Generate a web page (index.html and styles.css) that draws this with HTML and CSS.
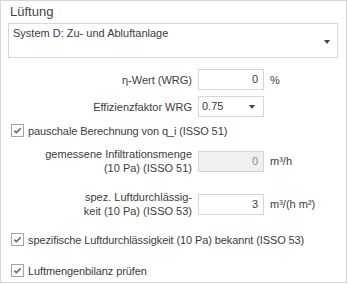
FILE: index.html
```html
<!DOCTYPE html>
<html lang="de">
  <head>
    <meta charset="UTF-8" />
    <title>Lüftung</title>
    <link rel="stylesheet" href="styles.css">
  </head>
  <body>
    <div class="panel">
      <!-- Gruppe Lüftung -->
      <div class="caption">Lüftung</div>
      <div class="combo">
        <span>System D: Zu- und Abluftanlage</span>
        <span class="arrow"></span>
      </div>

      <div class="row row-eta">
        <label>η-Wert (WRG)</label>
        <div class="field">0</div>
        <span class="unit">%</span>
      </div>

      <div class="row row-eff">
        <label>Effizienzfaktor WRG</label>
        <div class="field select">
          <span>0.75</span>
          <span class="arrow"></span>
        </div>
      </div>

      <div class="check check-pauschal">
        <span class="box">
          <svg width="11" height="11" viewBox="0 0 11 11"><path d="M2.3 5.6 L4.4 7.6 L8.7 3.4" fill="none" stroke="#6a6a6a" stroke-width="1.5"/></svg>
        </span>
        <span class="text">pauschale Berechnung von q_i (ISSO 51)</span>
      </div>

      <div class="row row-two row-gem">
        <label>gemessene Infiltrationsmenge<br>(10 Pa) (ISSO 51)</label>
        <div class="field disabled">0</div>
        <span class="unit">m³/h</span>
      </div>

      <div class="row row-two row-spez">
        <label>spez. Luftdurchlässig-<br>keit (10 Pa) (ISSO 53)</label>
        <div class="field">3</div>
        <span class="unit">m³/(h m²)</span>
      </div>

      <div class="check check-spez">
        <span class="box">
          <svg width="11" height="11" viewBox="0 0 11 11"><path d="M2.3 5.6 L4.4 7.6 L8.7 3.4" fill="none" stroke="#6a6a6a" stroke-width="1.5"/></svg>
        </span>
        <span class="text">spezifische Luftdurchlässigkeit (10 Pa) bekannt (ISSO 53)</span>
      </div>

      <div class="check check-bilanz">
        <span class="box">
          <svg width="11" height="11" viewBox="0 0 11 11"><path d="M2.3 5.6 L4.4 7.6 L8.7 3.4" fill="none" stroke="#6a6a6a" stroke-width="1.5"/></svg>
        </span>
        <span class="text">Luftmengenbilanz prüfen</span>
      </div>
    </div>
  </body>
</html>
```

FILE: styles.css
```css
body {
  margin: 0;
  background: white;
  font-family: "Liberation Sans", Arial, sans-serif;
  font-size: 11px;
  color: #3c3c3c;
}
.panel {
  box-sizing: border-box;
  width: 347px;
  height: 283px;
  border: 1px solid #d6d6d6;
  padding: 0 0 0 7px;
}
.caption {
  font-size: 13px;
  line-height: 16px;
  height: 22px;
  padding: 3px 0 0 2px;
  box-sizing: border-box;
  color: #444;
}
.combo {
  box-sizing: border-box;
  width: 330px;
  height: 35px;
  border: 1px solid #d6d6d6;
  padding: 3px 4px;
  line-height: 13px;
  position: relative;
}
.combo .arrow {
  position: absolute;
  right: 7px;
  top: 16px;
}
.arrow {
  display: inline-block;
  width: 0;
  height: 0;
  border-left: 3px solid transparent;
  border-right: 3px solid transparent;
  border-top: 4px solid #444;
}
.row {
  display: grid;
  grid-template-columns: 184px 66px auto;
  column-gap: 6px;
  align-items: center;
  height: 21px;
}
.row label {
  text-align: right;
  line-height: 14px;
}
.field {
  box-sizing: border-box;
  height: 21px;
  border: 1px solid #d6d6d6;
  padding: 0 5px;
  line-height: 19px;
  text-align: right;
}
.field.select {
  display: flex;
  justify-content: space-between;
  align-items: center;
  text-align: left;
  padding: 0 8px 0 3px;
}
.field.disabled {
  background: #efefef;
  color: #8a8a8a;
}
.row-eta {
  margin-top: 11px;
}
.row-eff {
  margin-top: 6px;
}
.row-two {
  height: 28px;
}
.row-gem {
  margin-top: 10px;
}
.row-spez {
  margin-top: 15px;
}
.check {
  display: flex;
  align-items: center;
  gap: 4px;
  height: 13px;
  padding-left: 3px;
}
.check .text {
  letter-spacing: -0.1px;
}
.box {
  box-sizing: border-box;
  width: 13px;
  height: 13px;
  border: 1px solid #a4a4a4;
  display: flex;
  align-items: center;
  justify-content: center;
}
.check-pauschal {
  margin-top: 7px;
}
.check-spez {
  margin-top: 15px;
}
.check-bilanz {
  margin-top: 18px;
}
```
